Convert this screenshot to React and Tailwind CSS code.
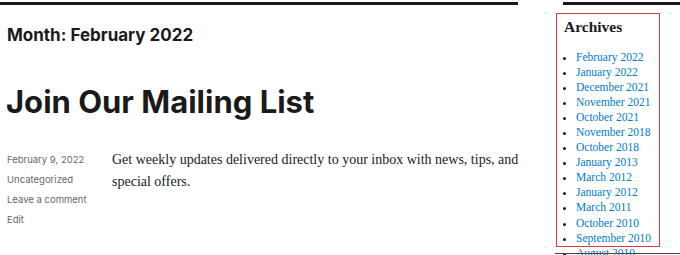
import React from "react";

const archives = [
  "February 2022",
  "January 2022",
  "December 2021",
  "November 2021",
  "October 2021",
  "November 2018",
  "October 2018",
  "January 2013",
  "March 2012",
  "January 2012",
  "March 2011",
  "October 2010",
  "September 2010",
  "August 2010",
];

export default function App() {
  return (
    <div className="w-[680px] h-[255px] overflow-hidden bg-white flex relative">
      <div className="w-[518px] shrink-0 pt-[2px]">
        <div className="h-[3px] bg-[#1a1a1a]" />
        <h1 className="pl-[7px] mt-[18px] text-[17px] leading-[24px] font-bold text-[#1a1a1a] [font-family:Inter,'DejaVu_Sans',sans-serif]">
          Month: February 2022
        </h1>
        <h2 className="pl-[6px] mt-[37px] text-[31px] leading-[36px] font-bold text-[#1a1a1a] [font-family:Inter,'DejaVu_Sans',sans-serif]">
          Join Our Mailing List
        </h2>
        <div className="flex items-start mt-[30px]">
          <div className="w-[112px] shrink-0 pl-[7px] text-[9.5px] leading-[20px] text-[#686868] [font-family:Inter,'DejaVu_Sans',sans-serif]">
            <div>February 9, 2022</div>
            <div>Uncategorized</div>
            <div>Leave a comment</div>
            <div>Edit</div>
          </div>
          <p className="w-[414px] shrink-0 -mt-[1px] text-[14px] leading-[22px] text-[#1a1a1a] [font-family:'Liberation_Serif',serif]">
            Get weekly updates delivered directly to your inbox with news, tips, and special offers.
          </p>
        </div>
      </div>
      <div className="ml-[38px] w-[124px] shrink-0 pt-[2px]">
        <div className="ml-[7px] h-[3px] bg-[#1a1a1a]" />
        <div className="mt-[8px] w-[104px] h-[234px] border border-[#e0393e] pl-[7px] pt-[3px]">
          <h3 className="text-[15.5px] leading-[20px] font-bold text-[#1a1a1a] [font-family:'Liberation_Serif',serif]">
            Archives
          </h3>
          <ul className="mt-[13px] list-disc pl-[12px] text-[11.5px] leading-[15.05px] text-[#007acc] [font-family:'Liberation_Serif',serif] marker:text-[#1a1a1a] whitespace-nowrap">
            {archives.map((a) => (
              <li key={a}>{a}</li>
            ))}
          </ul>
        </div>
      </div>
      <div className="absolute left-[555px] right-0 top-[253px] h-[1px] bg-[#444]" />
    </div>
  );
}
